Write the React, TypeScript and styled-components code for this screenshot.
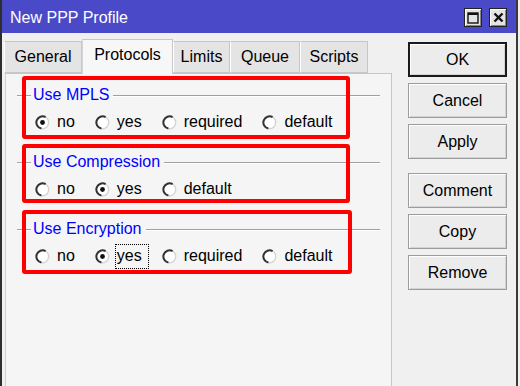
import React from "react";
import styled, { createGlobalStyle } from "styled-components";

const GlobalStyle = createGlobalStyle`
  html, body { margin: 0; padding: 0; background: #f0f0f0; }
  body { font-family: "Liberation Sans", Arial, sans-serif; font-size: 16px; color: #000; }
  * { box-sizing: border-box; }
`;

const Window = styled.div`
  width: 518px;
  height: 386px;
  display: flex;
  flex-direction: column;
  overflow: hidden;
  background: #f0f0f0;
  border-left: 2px solid #2e2e2e;
  border-right: 2px solid #3a3a3a;
`;

const TitleBar = styled.div`
  height: 33px;
  flex: none;
  display: flex;
  align-items: center;
  background: #4a4ac8;
  padding: 0 9px 0 8px;
`;

const TitleText = styled.div`
  color: #fff;
  font-size: 16px;
  flex: 1;
  margin-top: 2px;
`;

const TitleButton = styled.div<{ $ml?: number }>`
  width: 18px;
  height: 19px;
  margin-left: ${(p) => p.$ml ?? 0}px;
  margin-top: 2px;
  background: #e4e4e4;
  border: 1px solid #222;
  box-shadow: inset 1px 1px 0 #fff, inset -1px -1px 0 #888;
  display: flex;
  align-items: center;
  justify-content: center;
`;

const Body = styled.div`
  flex: 1;
  display: flex;
  min-height: 0;
`;

const LeftCol = styled.div`
  display: flex;
  flex-direction: column;
  padding: 3px 0 0 2px;
`;

const TabRow = styled.div`
  display: flex;
  align-items: flex-end;
  height: 37px;
  position: relative;
  z-index: 1;
`;

const Tab = styled.div<{ $w: number; $active?: boolean }>`
  width: ${(p) => p.$w}px;
  height: ${(p) => (p.$active ? 35 : 32)}px;
  margin-bottom: ${(p) => (p.$active ? -1 : 0)}px;
  display: flex;
  align-items: center;
  justify-content: center;
  padding-bottom: ${(p) => (p.$active ? 4 : 0)}px;
  background: ${(p) => (p.$active ? "#f7f7f7" : "#e4e4e4")};
  border: 1px solid #c6c6c6;
  border-bottom: ${(p) => (p.$active ? "none" : "1px solid #c6c6c6")};
  border-left-color: ${(p) => (p.$active ? "#d6d6d6" : "#fff")};
  font-size: 16px;
  white-space: nowrap;
`;

const Panel = styled.div`
  width: 387px;
  flex: 1;
  margin-left: 1px;
  margin-bottom: -4px;
  background: #f5f5f5;
  border: 1px solid #c6c6c6;
  border-left-color: #d0d0d0;
  padding: 11px 11px 0 11px;
`;

const Group = styled.div`
  position: relative;
  margin-bottom: 16px;
`;

const GroupHeader = styled.div`
  height: 20px;
  display: flex;
  align-items: center;
`;

const Rule = styled.div<{ $w?: number }>`
  ${(p) => (p.$w ? `width: ${p.$w}px;` : "flex: 1;")}
  height: 2px;
  border-top: 1px solid #a0a0a0;
  border-bottom: 1px solid #fff;
  margin-top: 1px;
`;

const GroupLabel = styled.div`
  color: #0000ff;
  font-size: 16px;
  padding: 0 4px 0 2px;
`;

const RadioRow = styled.div`
  margin-top: 3px;
  height: 28px;
  display: flex;
  align-items: center;
  padding-left: 18px;
  gap: 13px;
`;

const RadioItem = styled.div`
  display: flex;
  align-items: center;
`;

const RadioCircle = styled.svg`
  width: 15px;
  height: 15px;
  flex: none;
  margin-right: 5px;
`;

const RadioText = styled.span<{ $focus?: boolean }>`
  font-size: 16px;
  padding: 2px 6px 3px 1px;
  border: 1px dotted ${(p) => (p.$focus ? "#000" : "transparent")};
  line-height: 18px;
`;

const Annotation = styled.div<{ $top: number; $h: number; $w: number }>`
  position: absolute;
  left: 5px;
  top: ${(p) => p.$top}px;
  width: ${(p) => p.$w}px;
  height: ${(p) => p.$h}px;
  border: 4px solid #ff0000;
  border-radius: 3px;
  pointer-events: none;
`;

const RightCol = styled.div`
  margin-left: 16px;
  padding-top: 9px;
  display: flex;
  flex-direction: column;
`;

const Button = styled.div<{ $default?: boolean; $mt: number }>`
  width: 99px;
  height: 35px;
  margin-top: ${(p) => p.$mt}px;
  display: flex;
  align-items: center;
  justify-content: center;
  font-size: 16px;
  background: #ececec;
  border: ${(p) => (p.$default ? "2px solid #1a1a1a" : "1px solid #9c9c9c")};
  box-shadow: inset 1px 1px 0 #fff, inset -1px -1px 0 #d4d4d4;
`;

const Radio = ({ label, checked, focus }: { label: string; checked?: boolean; focus?: boolean }) => (
  <RadioItem>
    <RadioCircle viewBox="0 0 15 15">
      <circle cx="7.5" cy="7.5" r="6.2" fill="#fff" stroke="#d4d4d4" strokeWidth="1.4" />
      <path d="M10.6 2.1 A6.2 6.2 0 1 0 6.4 13.6" fill="none" stroke="#333" strokeWidth="2" />
      {checked && <circle cx="7.5" cy="7.5" r="2.4" fill="#111" />}
    </RadioCircle>
    <RadioText $focus={focus}>{label}</RadioText>
  </RadioItem>
);

type Opt = { label: string; checked?: boolean; focus?: boolean };

const GroupBox = ({
  title,
  options,
  box,
}: {
  title: string;
  options: Opt[];
  box: { top: number; h: number; w: number };
}) => (
  <Group>
    <GroupHeader>
      <Rule $w={14} />
      <GroupLabel>{title}</GroupLabel>
      <Rule />
    </GroupHeader>
    <RadioRow>
      {options.map((o) => (
        <Radio key={o.label} {...o} />
      ))}
    </RadioRow>
    <Annotation $top={box.top} $h={box.h} $w={box.w} />
  </Group>
);

export default function App() {
  return (
    <>
      <GlobalStyle />
      <Window>
        <TitleBar>
          <TitleText>New PPP Profile</TitleText>
          <TitleButton>
            <svg width="12" height="12" viewBox="0 0 12 12">
              <rect x="1" y="1" width="10" height="10" fill="none" stroke="#111" strokeWidth="1.4" />
              <line x1="1" y1="2" x2="11" y2="2" stroke="#111" strokeWidth="2" />
            </svg>
          </TitleButton>
          <TitleButton $ml={7}>
            <svg width="11" height="11" viewBox="0 0 11 11">
              <path d="M1.5 1.5 L9.5 9.5 M9.5 1.5 L1.5 9.5" stroke="#111" strokeWidth="2.4" />
            </svg>
          </TitleButton>
        </TitleBar>
        <Body>
          <LeftCol>
            <TabRow>
              <Tab $w={78}>General</Tab>
              <Tab $w={91} $active>Protocols</Tab>
              <Tab $w={57}>Limits</Tab>
              <Tab $w={70}>Queue</Tab>
              <Tab $w={68}>Scripts</Tab>
            </TabRow>
            <Panel>
              <GroupBox
                title="Use MPLS"
                options={[{ label: "no", checked: true }, { label: "yes" }, { label: "required" }, { label: "default" }]}
                box={{ top: -9, h: 63, w: 328 }}
              />
              <GroupBox
                title="Use Compression"
                options={[{ label: "no" }, { label: "yes", checked: true }, { label: "default" }]}
                box={{ top: -8, h: 59, w: 328 }}
              />
              <GroupBox
                title="Use Encryption"
                options={[
                  { label: "no" },
                  { label: "yes", checked: true, focus: true },
                  { label: "required" },
                  { label: "default" },
                ]}
                box={{ top: -9, h: 64, w: 330 }}
              />
            </Panel>
          </LeftCol>
          <RightCol>
            <Button $default $mt={0}>OK</Button>
            <Button $mt={6}>Cancel</Button>
            <Button $mt={6}>Apply</Button>
            <Button $mt={14}>Comment</Button>
            <Button $mt={6}>Copy</Button>
            <Button $mt={6}>Remove</Button>
          </RightCol>
        </Body>
      </Window>
    </>
  );
}
